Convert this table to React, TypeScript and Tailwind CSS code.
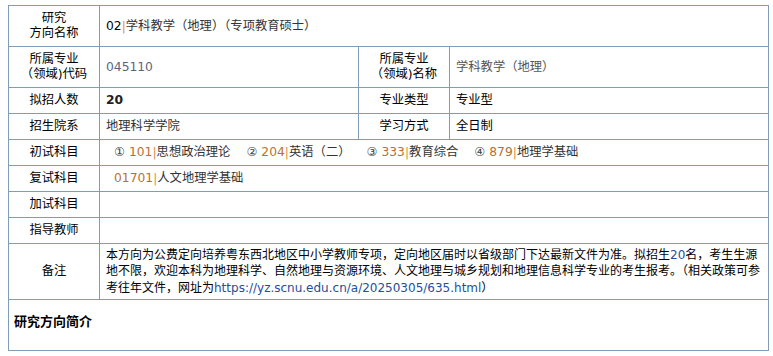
const label = "border border-[#7f9db9] text-center align-middle text-black";
const value = "border border-[#7f9db9] pl-[6px] pr-[4px] align-middle";

function Code({ code, name, codeClass = "text-[#b8702e]" }: { code: string; name: string; codeClass?: string }) {
  return (
    <span>
      <span className={codeClass}>{code}</span>
      <span className="text-[#e0923c]">|</span>
      <span className="text-[#333]">{name}</span>
    </span>
  );
}

const exams = [
  { n: "①", code: "101", name: "思想政治理论" },
  { n: "②", code: "204", name: "英语（二）" },
  { n: "③", code: "333", name: "教育综合" },
  { n: "④", code: "879", name: "地理学基础" },
];

export default function App() {
  return (
    <div className="bg-white min-h-screen pt-[5px] pl-[8px] text-[12.3px] leading-[15px] [font-family:'DejaVu_Sans','Noto_Sans_CJK_SC',sans-serif]">
      <table className="w-[760px] table-fixed border-collapse border border-[#7f9db9]">
        <colgroup>
          <col className="w-[91px]" />
          <col className="w-[259px]" />
          <col className="w-[91px]" />
          <col className="w-[319px]" />
        </colgroup>
        <tbody>
          <tr className="h-[41px]">
            <td className={label}>
              研究
              <br />
              方向名称
            </td>
            <td className={value} colSpan={3}>
              <Code code="02" name="学科教学（地理）（专项教育硕士）" codeClass="text-black" />
            </td>
          </tr>
          <tr className="h-[41px]">
            <td className={label}>
              所属专业
              <br />
              （领域)代码
            </td>
            <td className={`${value} text-[#5a6482]`}>045110</td>
            <td className={label}>
              所属专业
              <br />
              （领域)名称
            </td>
            <td className={`${value} text-[#555]`}>学科教学（地理）</td>
          </tr>
          <tr className="h-[26px]">
            <td className={label}>拟招人数</td>
            <td className={`${value} font-bold text-[#222]`}>20</td>
            <td className={label}>专业类型</td>
            <td className={`${value} text-black`}>专业型</td>
          </tr>
          <tr className="h-[26px]">
            <td className={label}>招生院系</td>
            <td className={`${value} text-[#333]`}>地理科学学院</td>
            <td className={label}>学习方式</td>
            <td className={`${value} text-black`}>全日制</td>
          </tr>
          <tr className="h-[26px]">
            <td className={label}>初试科目</td>
            <td className={`${value} pl-[14px]`} colSpan={3}>
              <div className="flex gap-[16px] whitespace-nowrap">
                {exams.map((e) => (
                  <span key={e.code}>
                    <span className="text-[#444]">{e.n} </span>
                    <Code code={e.code} name={e.name} />
                  </span>
                ))}
              </div>
            </td>
          </tr>
          <tr className="h-[26px]">
            <td className={label}>复试科目</td>
            <td className={`${value} pl-[14px]`} colSpan={3}>
              <Code code="01701" name="人文地理学基础" />
            </td>
          </tr>
          <tr className="h-[26px]">
            <td className={label}>加试科目</td>
            <td className={value} colSpan={3}></td>
          </tr>
          <tr className="h-[26px]">
            <td className={label}>指导教师</td>
            <td className={value} colSpan={3}></td>
          </tr>
          <tr className="h-[56px]">
            <td className={label}>备注</td>
            <td className={`${value} text-black text-[12px] leading-[16.5px] whitespace-nowrap`} colSpan={3}>
              本方向为公费定向培养粤东西北地区中小学教师专项，定向地区届时以省级部门下达最新文件为准。拟招生
              <span className="text-[#1f4e9c]">20</span>名，考生生源
              <br />
              地不限，欢迎本科为地理科学、自然地理与资源环境、人文地理与城乡规划和地理信息科学专业的考生报考。（相关政策可参
              <br />
              考往年文件，网址为<span className="text-[#1f4e9c]">https://yz.scnu.edu.cn/a/20250305/635.html</span>）
            </td>
          </tr>
          <tr className="h-[51px]">
            <td className="border border-[#7f9db9] pl-[5px] pt-[14px] align-top" colSpan={4}>
              <span className="font-bold text-black text-[13px]">研究方向简介</span>
            </td>
          </tr>
        </tbody>
      </table>
    </div>
  );
}
